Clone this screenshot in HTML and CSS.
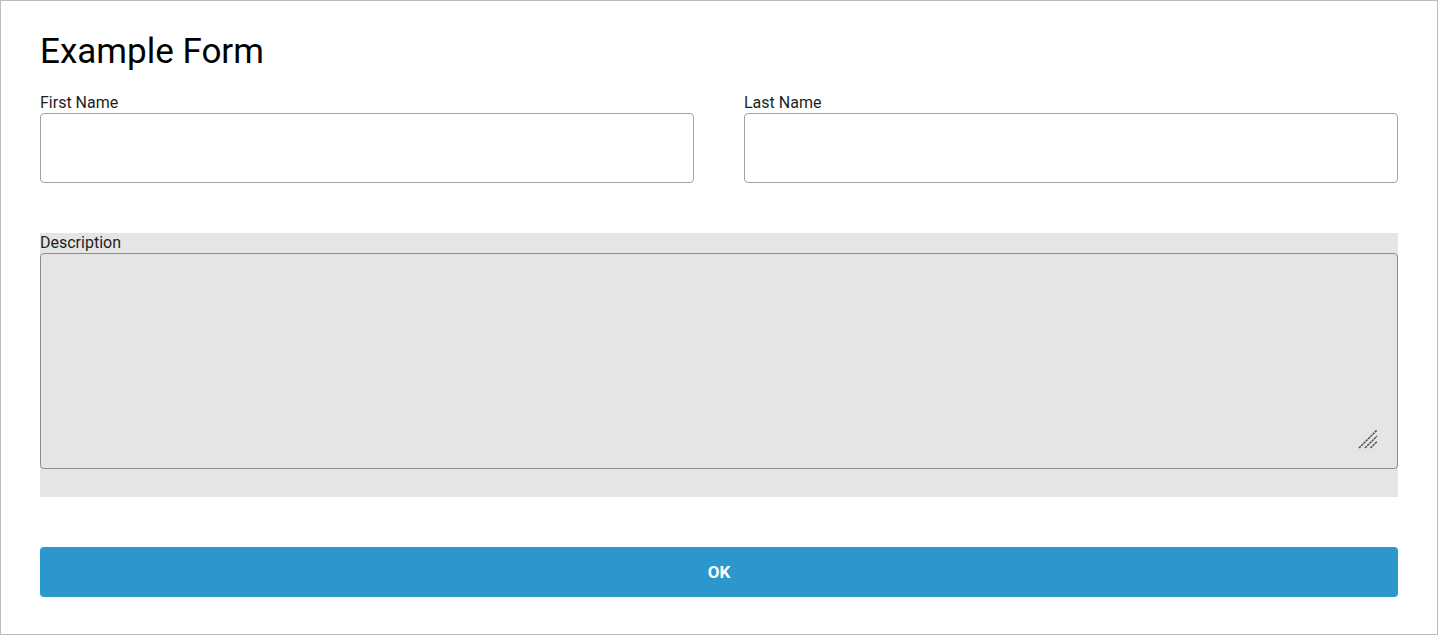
FILE: index.html
```html
<!DOCTYPE html>
<html lang="en">
<head>
<meta charset="utf-8">
<title>Example Form</title>
<link rel="stylesheet" href="styles.css">
</head>
<body>
<div class="page">
  <h1 class="title">Example Form</h1>
  <div class="row">
    <div class="field">
      <label class="label" for="first">First Name</label>
      <input class="input" id="first" type="text">
    </div>
    <div class="field">
      <label class="label" for="last">Last Name</label>
      <input class="input" id="last" type="text">
    </div>
  </div>
  <div class="desc">
    <label class="label" for="desc">Description</label>
    <div class="ta-wrap">
      <textarea class="textarea" id="desc"></textarea>
      <svg class="grip" width="20" height="20" viewBox="0 0 20 20" aria-hidden="true">
        <line x1="1" y1="19" x2="19" y2="1"/>
        <line x1="7" y1="19" x2="19" y2="7"/>
        <line x1="12.5" y1="19" x2="19" y2="12.5"/>
      </svg>
    </div>
  </div>
  <button class="btn" type="button">OK</button>
</div>
</body>
</html>
```
FILE: styles.css
```css
html, body {
  margin: 0;
  padding: 0;
  background: #ffffff;
}
body {
  font-family: Roboto, "Liberation Sans", sans-serif;
}
.page {
  box-sizing: border-box;
  width: 1438px;
  height: 635px;
  border: 1px solid #bdbdbd;
  padding: 30px 39px 37px 39px;
  display: flex;
  flex-direction: column;
}
.title {
  margin: 0 0 21px 0;
  font-size: 35px;
  line-height: 41px;
  font-weight: 400;
  color: #000;
}
.row {
  display: grid;
  grid-template-columns: 1fr 1fr;
  gap: 50px;
}
.field {
  display: flex;
  flex-direction: column;
}
.label {
  display: block;
  font-size: 16px;
  line-height: 20px;
  color: #1e1e1e;
}
.input {
  box-sizing: border-box;
  height: 70px;
  width: 100%;
  margin: 0;
  border: 1px solid #a3a3a3;
  border-radius: 4px;
  background: #fff;
  font: inherit;
  padding: 0 10px;
}
.desc {
  margin-top: 50px;
  background: #e5e5e5;
  padding-bottom: 28px;
  display: flex;
  flex-direction: column;
}
.ta-wrap {
  position: relative;
}
.textarea {
  box-sizing: border-box;
  display: block;
  width: 100%;
  height: 216px;
  margin: 0;
  border: 1px solid #8c8c8c;
  border-radius: 4px;
  background: #e5e5e5;
  font: inherit;
  resize: none;
}
.grip {
  position: absolute;
  right: 20px;
  bottom: 20px;
  stroke: #4f4f4f;
  stroke-width: 1.5;
  stroke-dasharray: 2.5 0.7;
  pointer-events: none;
}
.btn {
  margin-top: 50px;
  height: 50px;
  border: none;
  border-radius: 4px;
  background: #2c97cc;
  color: #fff;
  font-family: Roboto, "Liberation Sans", sans-serif;
  font-size: 17px;
  font-weight: 700;
  cursor: pointer;
}
```
